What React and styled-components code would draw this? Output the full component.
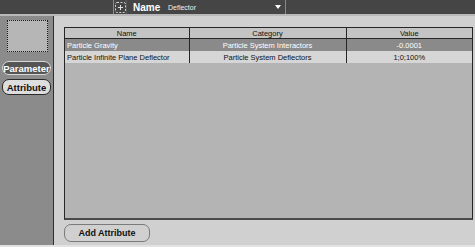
import React from "react";
import styled, { createGlobalStyle } from "styled-components";

const Global = createGlobalStyle`
  html, body {
    margin: 0;
    padding: 0;
    width: 475px;
    height: 247px;
    overflow: hidden;
    background: #d0d0d0;
    font-family: "Liberation Sans", Arial, sans-serif;
  }
`;

const Frame = styled.div`
  width: 475px;
  height: 247px;
  display: flex;
  flex-direction: column;
  background: #d0d0d0;
`;

const TopBar = styled.div`
  height: 14px;
  background: #454545;
  border-bottom: 2px solid #b8b8b8;
  display: flex;
  align-items: center;
  padding-left: 113px;
`;

const PickIcon = styled.div`
  width: 12px;
  height: 14px;
  border-left: 1px solid #8a8a8a;
  border-right: 1px solid #5a5a5a;
  display: flex;
  align-items: center;
  justify-content: center;
`;

const FieldLabel = styled.span`
  margin-left: 6px;
  color: #fff;
  font-weight: bold;
  font-size: 10px;
  width: 35px;
`;

const FieldValue = styled.span`
  color: #f0f0f0;
  font-size: 7px;
  width: 107px;
`;

const Arrow = styled.span`
  width: 0;
  height: 0;
  border-left: 3px solid transparent;
  border-right: 3px solid transparent;
  border-top: 4px solid #fff;
  margin-right: 4px;
`;

const Divider = styled.span`
  width: 1px;
  height: 14px;
  background: #8a8a8a;
`;

const Body = styled.div`
  flex: 1;
  display: flex;
  border-bottom: 2px solid #e2e2e2;
`;

const Sidebar = styled.div`
  width: 53px;
  background: #8b8b8b;
  border-right: 1px solid #2e2e2e;
  display: flex;
  flex-direction: column;
  padding-top: 4px;
`;

const Thumb = styled.div`
  margin-left: 7px;
  width: 39px;
  height: 30px;
  border: 1px dotted #1a1a1a;
  background: #b6b6b6;
  margin-bottom: 9px;
`;

const TabButton = styled.div`
  margin: 0 0 4px 2px;
  width: 47px;
  height: ${(p) => (p.$active ? "12px" : "14px")};
  border-radius: 7px;
  border: 1px solid ${(p) => (p.$active ? "#d8d8d8" : "#2a2a2a")};
  background: ${(p) => (p.$active ? "#555555" : "#dedede")};
  color: ${(p) => (p.$active ? "#ffffff" : "#111111")};
  font-size: 9.5px;
  font-weight: bold;
  display: flex;
  align-items: center;
  justify-content: center;
`;

const Main = styled.div`
  flex: 1;
  display: flex;
  flex-direction: column;
  padding: 11px 2px 3px 10px;
`;

const TablePanel = styled.div`
  height: 190px;
  background: #b4b4b4;
  border: 1px solid #262626;
  border-bottom: 2px solid #4a4a4a;
`;

const Grid = styled.table`
  width: 100%;
  border-collapse: collapse;
  table-layout: fixed;
  font-size: 7.5px;
`;

const HeadCell = styled.th`
  height: 10px;
  padding: 0;
  font-weight: normal;
  background: #c4c4c4;
  color: #111;
  border-right: 1px solid #262626;
  border-bottom: 1px solid #262626;
  text-align: center;
  &:last-child { border-right: none; }
`;

const Row = styled.tr`
  background: ${(p) => (p.$selected ? "#8a8a8a" : "#d6d6d6")};
  color: ${(p) => (p.$selected ? "#ffffff" : "#111111")};
`;

const Cell = styled.td`
  height: 12px;
  padding: 0 2px;
  text-align: ${(p) => (p.$left ? "left" : "center")};
  border-right: 1px solid #262626;
  white-space: nowrap;
  overflow: hidden;
  &:last-child { border-right: none; }
`;

const AddButton = styled.div`
  margin-top: 4px;
  width: 84px;
  height: 16px;
  border: 1px solid #7a7a7a;
  border-radius: 7px;
  background: #d0d0d0;
  font-size: 9px;
  font-weight: bold;
  color: #111;
  display: flex;
  align-items: center;
  justify-content: center;
`;

const rows = [
  { name: "Particle Gravity", category: "Particle System Interactors", value: "-0.0001", selected: true },
  { name: "Particle Infinite Plane Deflector", category: "Particle System Deflectors", value: "1;0;100%" },
];

const App = () => (
  <Frame>
    <Global />
    <TopBar>
      <PickIcon>
        <svg width="11" height="11" viewBox="0 0 11 11">
          <rect x="0.5" y="0.5" width="10" height="10" rx="1.5" fill="none" stroke="#cfcfcf" strokeDasharray="2 1.5" />
          <path d="M5.5 3v5M3 5.5h5" stroke="#e0e0e0" strokeWidth="1" />
        </svg>
      </PickIcon>
      <FieldLabel>Name</FieldLabel>
      <FieldValue>Deflector</FieldValue>
      <Arrow />
      <Divider />
    </TopBar>
    <Body>
      <Sidebar>
        <Thumb />
        <TabButton $active>Parameter</TabButton>
        <TabButton>Attribute</TabButton>
      </Sidebar>
      <Main>
        <TablePanel>
          <Grid>
            <colgroup>
              <col style={{ width: 124 }} />
              <col style={{ width: 157 }} />
              <col />
            </colgroup>
            <thead>
              <tr>
                <HeadCell>Name</HeadCell>
                <HeadCell>Category</HeadCell>
                <HeadCell>Value</HeadCell>
              </tr>
            </thead>
            <tbody>
              {rows.map((r) => (
                <Row key={r.name} $selected={r.selected}>
                  <Cell $left>{r.name}</Cell>
                  <Cell>{r.category}</Cell>
                  <Cell>{r.value}</Cell>
                </Row>
              ))}
            </tbody>
          </Grid>
        </TablePanel>
        <AddButton>Add Attribute</AddButton>
      </Main>
    </Body>
  </Frame>
);

export default App;
